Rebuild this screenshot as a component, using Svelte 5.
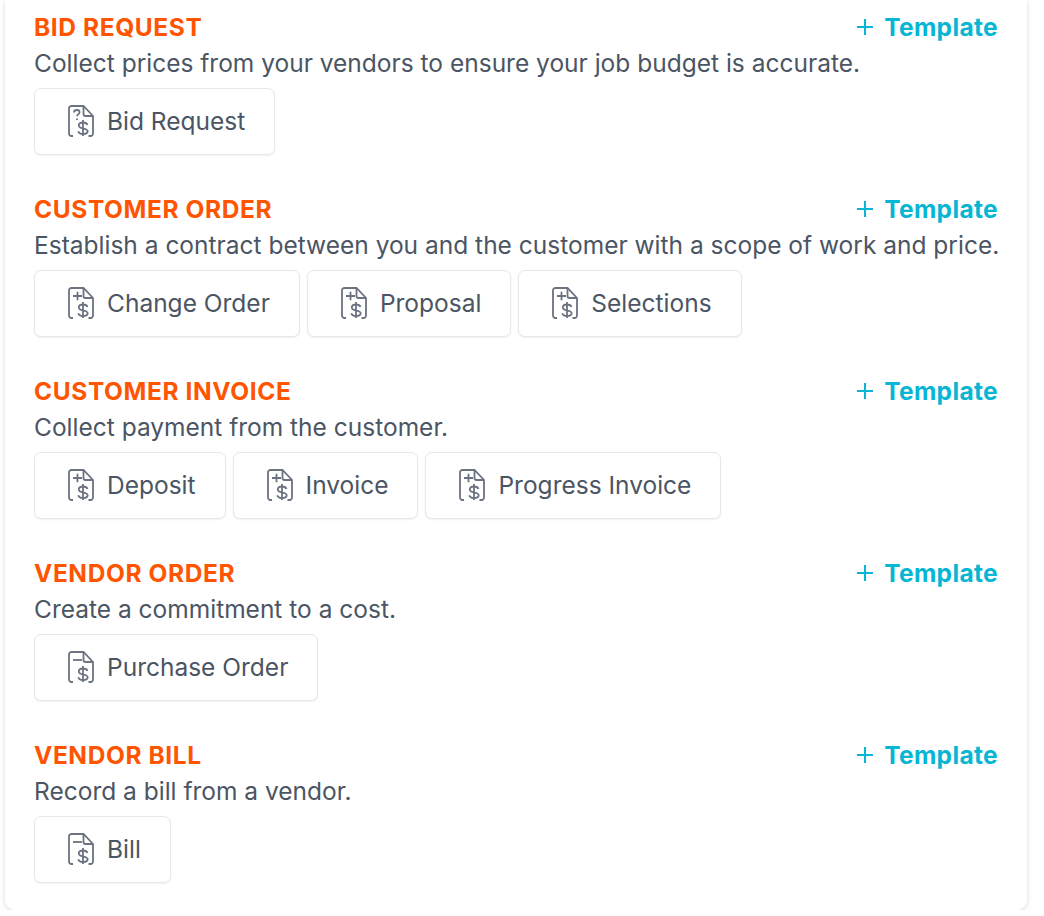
<script>
  const sections = [
    {
      title: 'BID REQUEST',
      text: 'Collect prices from your vendors to ensure your job budget is accurate.',
      items: [{ label: 'Bid Request', mark: 'question' }]
    },
    {
      title: 'CUSTOMER ORDER',
      text: 'Establish a contract between you and the customer with a scope of work and price.',
      items: [
        { label: 'Change Order', mark: 'plus' },
        { label: 'Proposal', mark: 'plus' },
        { label: 'Selections', mark: 'plus' }
      ]
    },
    {
      title: 'CUSTOMER INVOICE',
      text: 'Collect payment from the customer.',
      items: [
        { label: 'Deposit', mark: 'plus' },
        { label: 'Invoice', mark: 'plus' },
        { label: 'Progress Invoice', mark: 'plus' }
      ]
    },
    {
      title: 'VENDOR ORDER',
      text: 'Create a commitment to a cost.',
      items: [{ label: 'Purchase Order', mark: 'minus' }]
    },
    {
      title: 'VENDOR BILL',
      text: 'Record a bill from a vendor.',
      items: [{ label: 'Bill', mark: 'minus' }]
    }
  ];
</script>

<div class="card">
  {#each sections as section}
    <section class="section">
      <div class="head">
        <h2>{section.title}</h2>
        <button class="add">
          <svg class="plus" viewBox="0 0 18 18" aria-hidden="true">
            <path d="M9 1v16M1 9h16" />
          </svg>
          Template
        </button>
      </div>
      <p>{section.text}</p>
      <div class="items">
        {#each section.items as item}
          <button class="item">
            <svg class="doc" viewBox="0 0 26 32" aria-hidden="true">
              <path d="M5 31H3.500A2.500 2.500 0 0 1 1 28.500V3.500A2.500 2.500 0 0 1 3.500 1H15.500L25 11V28.500A2.500 2.500 0 0 1 22.500 31H20.500" />
              <path d="M15.500 1V9A2 2 0 0 0 17.500 11H25" />
              <path d="M19.500 20C19 18.400 17.300 17.500 15 17.500C12.400 17.500 10.800 18.700 10.800 20.500C10.800 24.800 19.700 22.400 19.700 26.300C19.700 28.100 17.800 29 15 29C12.500 29 10.700 28 10.300 26.300M15 15V31" />
              {#if item.mark === 'plus'}
                <path d="M5 9H14M9.500 4.700V13.300" />
              {:else if item.mark === 'minus'}
                <path d="M5 9H14" />
              {:else}
                <path d="M6 7.500C6 5.800 7.200 5 8.800 5C10.300 5 11.600 5.800 11.600 7.200C11.600 9 9 9.200 9 11.300" />
                <path d="M9 13.500V15" />
              {/if}
            </svg>
            {item.label}
          </button>
        {/each}
      </div>
    </section>
  {/each}
</div>

<style>
  :global(body) {
    background: #fff;
    font-family: Inter, "Liberation Sans", sans-serif;
  }

  .card {
    box-sizing: border-box;
    width: 1022px;
    margin-left: 5px;
    padding: 9px 29px 27px;
    background: #fff;
    border-radius: 0 0 10px 10px;
    box-shadow: 0 1px 5px rgba(0, 0, 0, 0.16);
    display: flex;
    flex-direction: column;
    gap: 36px;
  }

  .head {
    display: flex;
    justify-content: space-between;
    align-items: center;
    height: 36px;
  }

  h2 {
    margin: 0;
    font-size: 24.5px;
    line-height: 36px;
    font-weight: 700;
    letter-spacing: 0.6px;
    color: #ff5500;
  }

  .add {
    display: flex;
    align-items: center;
    gap: 10px;
    padding: 0;
    border: 0;
    background: none;
    font: 700 24.5px/36px Inter, sans-serif;
    letter-spacing: 0.35px;
    color: #06b6d4;
  }

  .plus {
    width: 18px;
    height: 18px;
    fill: none;
    stroke: #06b6d4;
    stroke-width: 2;
  }

  p {
    margin: 0;
    font-size: 24.5px;
    line-height: 36px;
    white-space: nowrap;
    color: #4b5563;
  }

  .items {
    display: flex;
    gap: 7px;
    margin-top: 7px;
  }

  .item {
    box-sizing: border-box;
    height: 67px;
    display: flex;
    align-items: center;
    gap: 13px;
    padding: 0 29px 2px 33px;
    background: #fff;
    border: 1px solid #e5e7eb;
    border-radius: 7px;
    box-shadow: 0 1px 2px rgba(0, 0, 0, 0.06);
    font: 400 24.5px/36px Inter, sans-serif;
    color: #4b5563;
  }

  .doc {
    width: 26px;
    height: 32px;
    fill: none;
    stroke: #6b7280;
    stroke-width: 1.8;
  }
</style>
